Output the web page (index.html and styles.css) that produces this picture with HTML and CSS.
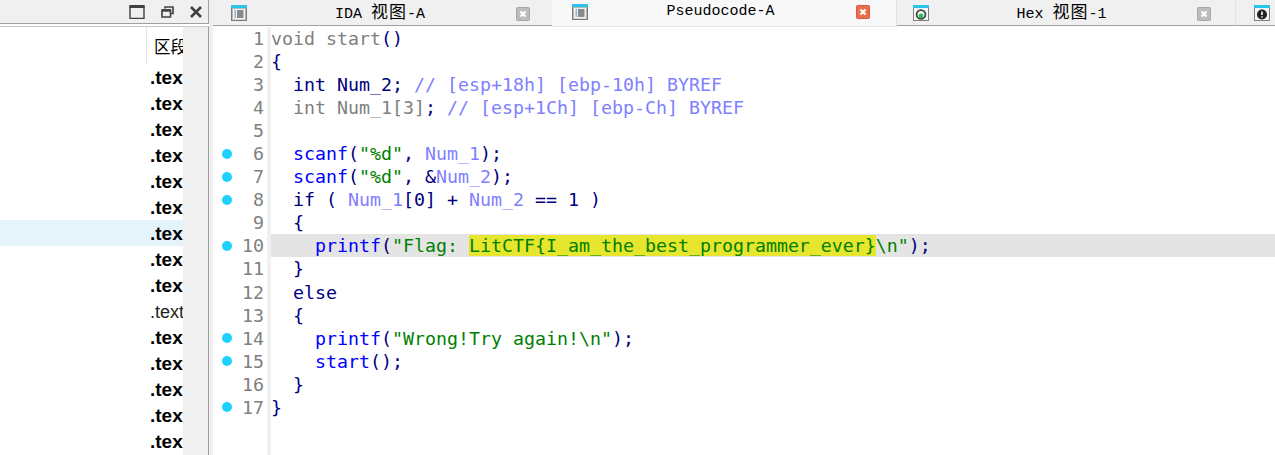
FILE: index.html
```html
<!DOCTYPE html>
<html lang="zh">
<head>
<meta charset="utf-8">
<title>Pseudocode-A</title>
<link rel="stylesheet" href="styles.css">
</head>
<body>
<svg class="defs" width="0" height="0" aria-hidden="true">
  <symbol id="ico-list" viewBox="0 0 16 16">
    <rect x="0.5" y="0.5" width="15" height="15" fill="#b8b8b8" stroke="#7a7a7a"/>
    <rect x="0" y="0" width="16" height="3" fill="#2cc3ea"/>
    <rect x="2" y="4" width="12" height="10.5" fill="#f2f2f2"/>
    <path d="M3.5 6h1.5M3.5 8h1.5M3.5 10h1.5M3.5 12h1.5" stroke="#1d7fc0" stroke-width="1"/>
    <path d="M6 6h6.5M6 8h6.5M6 10h6.5M6 12h6.5" stroke="#222" stroke-width="1"/>
  </symbol>
  <symbol id="ico-hex" viewBox="0 0 16 16">
    <rect x="0.5" y="0.5" width="15" height="15" fill="#f6f6f6" stroke="#7f7f7f"/>
    <rect x="0" y="0" width="16" height="3" fill="#2cc3ea"/>
    <circle cx="8" cy="9.5" r="4.4" fill="none" stroke="#444" stroke-width="1.8"/>
    <circle cx="8" cy="11" r="2.4" fill="#20c060"/>
  </symbol>
  <symbol id="ico-info" viewBox="0 0 16 16">
    <rect x="0.5" y="0.5" width="15" height="15" fill="#f6f6f6" stroke="#7f7f7f"/>
    <rect x="0" y="0" width="16" height="3" fill="#2cc3ea"/>
    <circle cx="8" cy="9.5" r="5" fill="#222"/>
    <path d="M8 6.5v3.5M8 11.2v1.4" stroke="#fff" stroke-width="1.6"/>
  </symbol>
  <symbol id="ico-close" viewBox="0 0 14 14">
    <rect class="close-box" x="0.5" y="0.5" width="13" height="13" rx="1"/>
    <path d="M4.5 4.5l5 5M9.5 4.5l-5 5" stroke="#fff" stroke-width="2.2"/>
  </symbol>
</svg>
<div class="app">
  <aside class="left">
    <div class="winbar">
      <svg class="win-ico win-max" width="16" height="14" viewBox="0 0 16 14"><path d="M1 1.5h14v12H1z" fill="none" stroke="#404040" stroke-width="1.4"/><path d="M0.5 1.5h15" stroke="#404040" stroke-width="3"/></svg>
      <svg class="win-ico win-restore" width="13" height="12" viewBox="0 0 13 12"><path d="M4 2.5V1h8v6.5h-2.5" fill="none" stroke="#404040" stroke-width="1.6"/><path d="M1 4h8.5v7H1z" fill="none" stroke="#404040" stroke-width="1.6"/><path d="M1 4.5h8.5" stroke="#404040" stroke-width="2.4"/></svg>
      <svg class="win-ico win-close" width="12" height="12" viewBox="0 0 12 12"><path d="M1 1l10 10M11 1L1 11" stroke="#404040" stroke-width="2.6"/></svg>
    </div>
    <div class="pane">
      <div class="list">
        <div class="list-head"><span class="head-cell">区段</span></div>
        <div class="row">.text</div>
        <div class="row">.text</div>
        <div class="row">.text</div>
        <div class="row">.text</div>
        <div class="row">.text</div>
        <div class="row">.text</div>
        <div class="row row-selected">.text</div>
        <div class="row">.text</div>
        <div class="row">.text</div>
        <div class="row row-plain">.text</div>
        <div class="row">.text</div>
        <div class="row">.text</div>
        <div class="row">.text</div>
        <div class="row">.text</div>
        <div class="row">.text</div>
      </div>
      <div class="scroll"></div>
    </div>
  </aside>
  <main class="right">
    <div class="tabs">
      <div class="tab tab-a">
        <svg class="tab-ico"><use href="#ico-list"/></svg>
        <span class="tab-label">IDA <span class="cjk">视图</span>-A</span>
        <svg class="tab-close"><use href="#ico-close"/></svg>
      </div>
      <div class="tab tab-active">
        <svg class="tab-ico"><use href="#ico-list"/></svg>
        <span class="tab-label">Pseudocode-A</span>
        <svg class="tab-close"><use href="#ico-close"/></svg>
      </div>
      <div class="tab tab-c">
        <svg class="tab-ico"><use href="#ico-hex"/></svg>
        <span class="tab-label">Hex <span class="cjk">视图</span>-1</span>
        <svg class="tab-close"><use href="#ico-close"/></svg>
      </div>
      <div class="tab tab-d">
        <svg class="tab-ico"><use href="#ico-info"/></svg>
      </div>
    </div>
    <div class="editor">
      <div class="gutter">
        <div class="gl"><span class="num">1</span></div>
        <div class="gl"><span class="num">2</span></div>
        <div class="gl"><span class="num">3</span></div>
        <div class="gl"><span class="num">4</span></div>
        <div class="gl"><span class="num">5</span></div>
        <div class="gl"><i class="dot"></i><span class="num">6</span></div>
        <div class="gl"><i class="dot"></i><span class="num">7</span></div>
        <div class="gl"><i class="dot"></i><span class="num">8</span></div>
        <div class="gl"><span class="num">9</span></div>
        <div class="gl"><i class="dot"></i><span class="num">10</span></div>
        <div class="gl"><span class="num">11</span></div>
        <div class="gl"><span class="num">12</span></div>
        <div class="gl"><span class="num">13</span></div>
        <div class="gl"><i class="dot"></i><span class="num">14</span></div>
        <div class="gl"><i class="dot"></i><span class="num">15</span></div>
        <div class="gl"><span class="num">16</span></div>
        <div class="gl"><i class="dot"></i><span class="num">17</span></div>
      </div>
      <div class="code">
        <div class="ln"><span class="g">void start</span>()</div>
        <div class="ln">{</div>
        <div class="ln">  int Num_2; <span class="v">// [esp+18h] [ebp-10h] BYREF</span></div>
        <div class="ln">  <span class="g">int Num_1[3]</span>; <span class="v">// [esp+1Ch] [ebp-Ch] BYREF</span></div>
        <div class="ln"> </div>
        <div class="ln">  <span class="f">scanf</span>(<span class="s">"%d"</span>, <span class="v">Num_1</span>);</div>
        <div class="ln">  <span class="f">scanf</span>(<span class="s">"%d"</span>, &amp;<span class="v">Num_2</span>);</div>
        <div class="ln">  if ( <span class="v">Num_1</span>[0] + <span class="v">Num_2</span> == 1 )</div>
        <div class="ln">  {</div>
        <div class="ln ln-current">    <span class="f">printf</span>(<span class="s">"Flag: <mark class="hl">LitCTF{I_am_the_best_programmer_ever}</mark>\n"</span>);</div>
        <div class="ln">  }</div>
        <div class="ln">  else</div>
        <div class="ln">  {</div>
        <div class="ln">    <span class="f">printf</span>(<span class="s">"Wrong!Try again!\n"</span>);</div>
        <div class="ln">    <span class="f">start</span>();</div>
        <div class="ln">  }</div>
        <div class="ln">}</div>
      </div>
    </div>
  </main>
</div>
</body>
</html>
```
FILE: styles.css
```css
html, body {
  margin: 0;
  padding: 0;
  background: #fff;
}
.defs {
  display: block;
  width: 0;
  height: 0;
}
.app {
  display: flex;
  width: 1275px;
  height: 455px;
  overflow: hidden;
}

/* left dock */
.left {
  width: 213px;
  flex: none;
  display: flex;
  flex-direction: column;
  box-sizing: border-box;
  border-right: 4px solid #f0f0f0;
}
.winbar {
  height: 23px;
  flex: none;
  display: flex;
  align-items: center;
  background: #f0f0f0;
  border-bottom: 1px solid #a0a0a0;
  border-right: 1px solid #a0a0a0;
}
.win-ico { flex: none; display: block; }
.win-max { margin-left: 129px; }
.win-restore { margin-left: 16px; }
.win-close { margin-left: 16px; }
.pane {
  flex: 1;
  min-height: 0;
  display: flex;
  margin-top: 2px;
  border-top: 1px solid #c8c8c8;
  border-right: 1px solid #a0a0a0;
}
.list {
  width: 183px;
  flex: none;
  overflow: hidden;
  background: #fff;
  font: 700 19px/28px "Liberation Sans", sans-serif;
  color: #000;
}
.scroll {
  flex: 1;
  background: #f0f0f0;
}
.list-head {
  height: 37px;
  padding-left: 146px;
  box-sizing: border-box;
}
.head-cell {
  display: block;
  height: 37px;
  width: 60px;
  box-sizing: border-box;
  padding-left: 7px;
  border-left: 1px solid #e5e5e5;
  font: 400 16.5px/38px "Noto Sans CJK SC", sans-serif;
  white-space: nowrap;
}
.row {
  height: 26px;
  padding-left: 150px;
  white-space: nowrap;
}
.row-selected { background: #e5f3fb; }
.row-plain { font-weight: 400; font-size: 18px; color: #222; }

/* tabs */
.right {
  flex: 1;
  min-width: 0;
  display: flex;
  flex-direction: column;
}
.tabs {
  height: 27px;
  flex: none;
  display: flex;
  align-items: flex-start;
  background: #fff;
}
.tab {
  flex: none;
  display: flex;
  align-items: center;
  box-sizing: border-box;
  height: 26px;
  background: #f0f0f0;
  border-bottom: 1px solid #a0a0a0;
  font: 400 15px/25px "Liberation Mono", monospace;
  color: #000;
}
.tab-a { width: 339px; padding: 0 22px 0 18px; }
.tab-active {
  width: 345px;
  height: 27px;
  padding: 0 26px 3px 20px;
  background: #f8f8f8;
  border-bottom: 1px solid #e4e4e4;
  border-right: 1px solid #e4e4e4;
}
.tab-c { width: 339px; padding: 0 24px 0 16px; border-right: 1px solid #e4e4e4; }
.tab-d { flex: 1; padding-left: 18px; }
.tab-ico { width: 16px; height: 16px; flex: none; display: block; }
.tab-close {
  width: 14px;
  height: 14px;
  flex: none;
  display: block;
  margin-top: 2px;
  fill: #bcbcbc;
  stroke: #a6a6a6;
}
.tab-active .tab-close {
  margin-top: 0;
  fill: #e8704f;
  stroke: #d9583f;
}
.tab-label {
  flex: 1;
  text-align: center;
  white-space: nowrap;
  padding-right: 3px;
}
.cjk {
  font: 400 17px/25px "Noto Sans CJK SC", sans-serif;
  letter-spacing: 1px;
}

/* editor */
.editor {
  flex: 1;
  min-height: 0;
  display: flex;
  background: #fff;
  font: 400 18.27px/23.06px "DejaVu Sans Mono", monospace;
}
.gutter {
  width: 58px;
  flex: none;
  box-sizing: border-box;
  border-right: 4px solid #f0f0f0;
  padding-left: 9px;
  padding-right: 3px;
  color: #808080;
}
.gl {
  height: 23.06px;
  display: flex;
  align-items: center;
}
.dot {
  width: 10px;
  height: 10px;
  border-radius: 50%;
  background: #1dd1ff;
  flex: none;
}
.num { margin-left: auto; }
.code {
  flex: 1;
  min-width: 0;
  color: #000080;
}
.ln {
  height: 23.06px;
  white-space: pre;
}
.ln-current { background: #e4e4e4; }
.hl {
  background: #e6e62e;
  color: inherit;
}
.g { color: #808080; }
.v { color: #8080ff; }
.f { color: #0000ff; }
.s { color: #008000; }
```
